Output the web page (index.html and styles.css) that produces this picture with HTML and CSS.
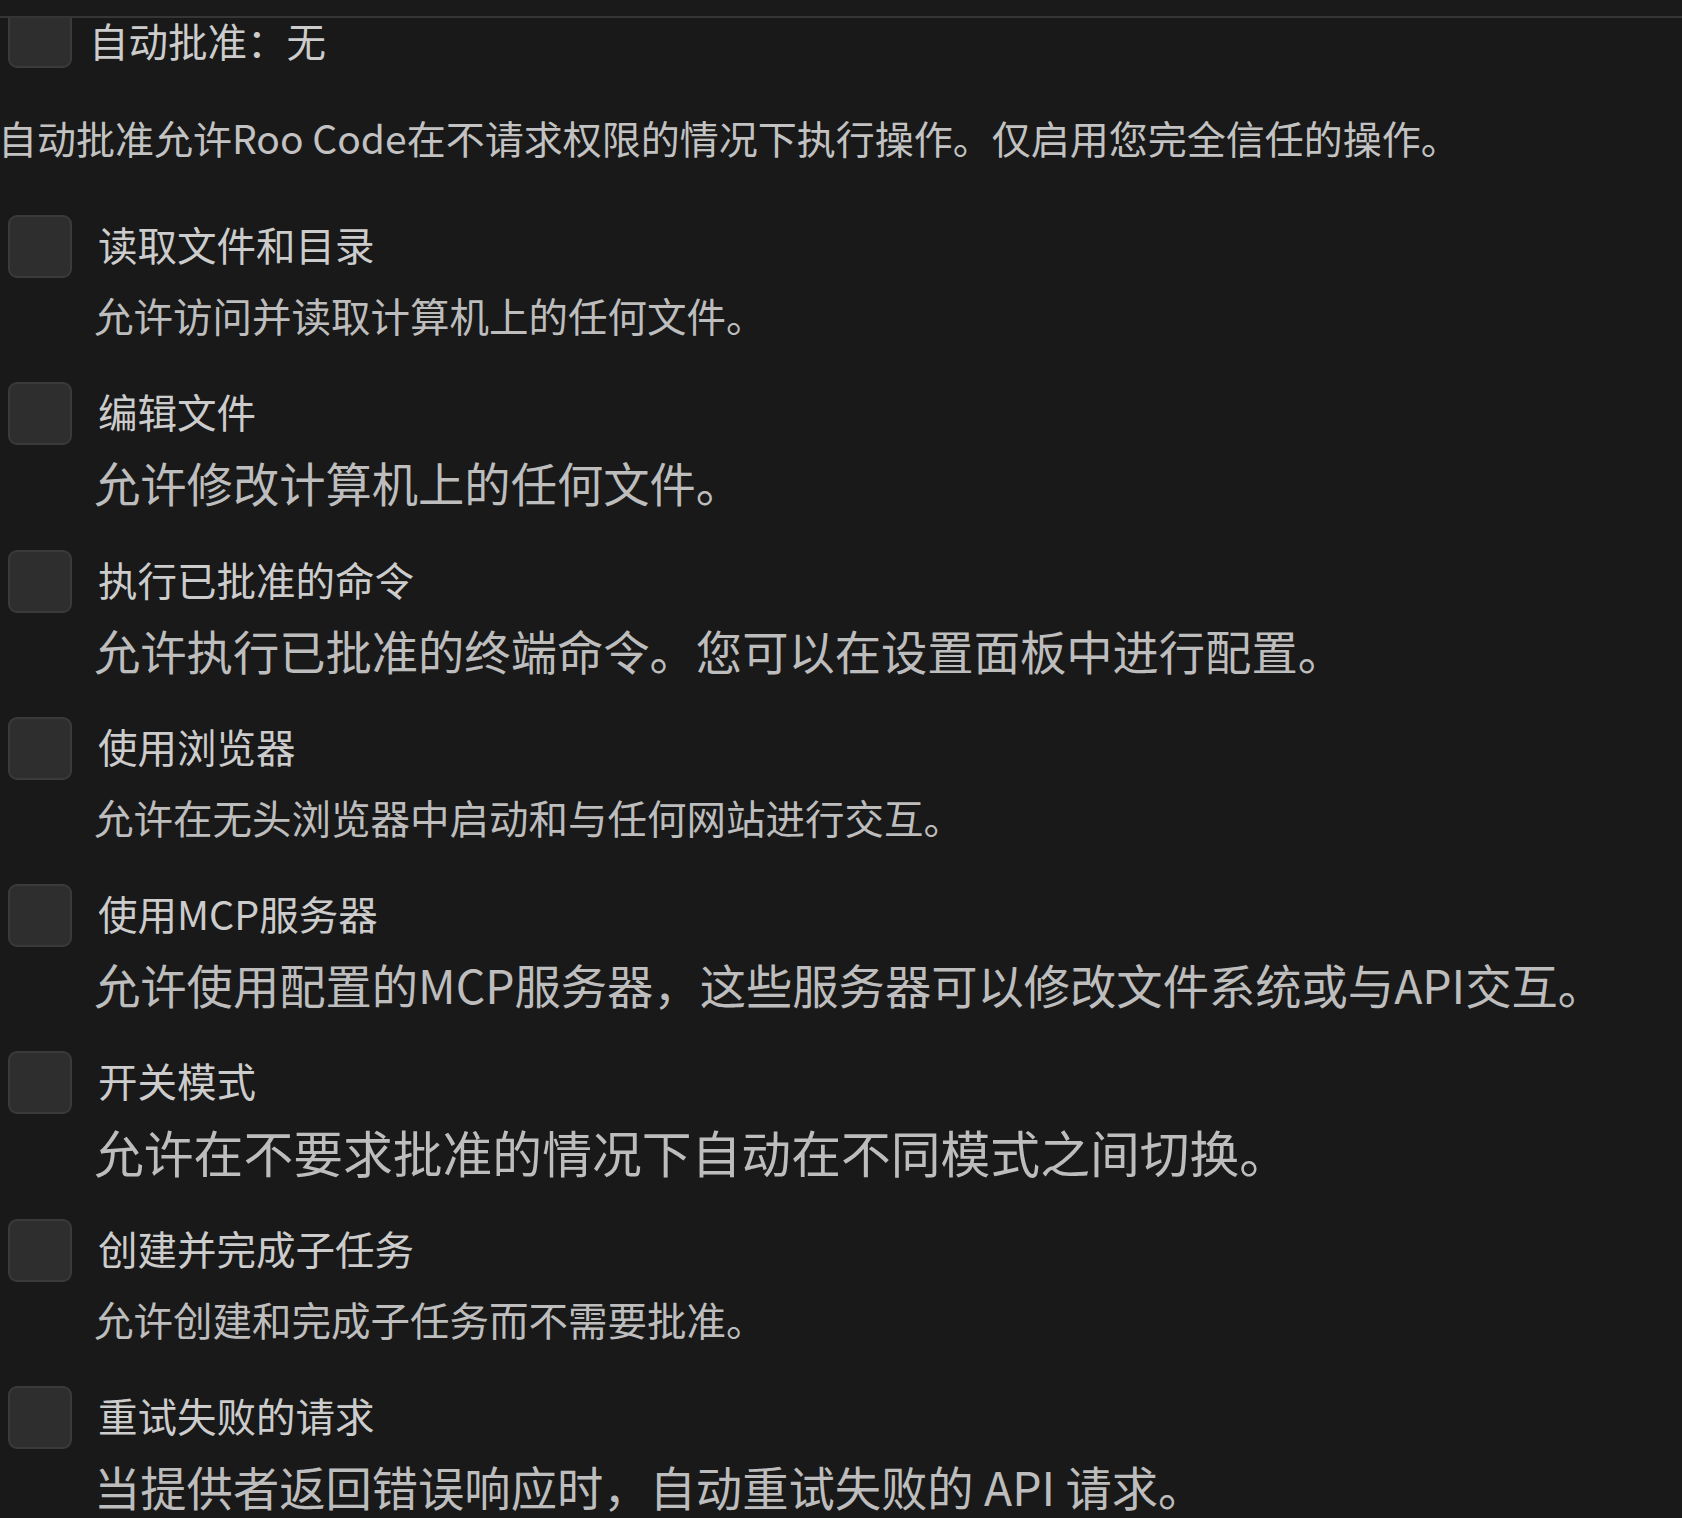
FILE: index.html
```html
<!DOCTYPE html>
<html lang="zh-CN">
<head>
<meta charset="utf-8">
<title>自动批准</title>
<link rel="stylesheet" href="styles.css">
</head>
<body>
<div class="header-edge"></div>
<main class="page">
  <div class="master-row">
    <span class="checkbox"></span>
    <span class="master-title">自动批准：无</span>
  </div>
  <p class="intro">自动批准允许Roo Code在不请求权限的情况下执行操作。仅启用您完全信任的操作。</p>
  <div class="options">
    <div class="option">
      <div class="option-row"><span class="checkbox"></span><span class="option-title">读取文件和目录</span></div>
      <p class="desc">允许访问并读取计算机上的任何文件。</p>
    </div>
    <div class="option">
      <div class="option-row"><span class="checkbox"></span><span class="option-title">编辑文件</span></div>
      <p class="desc desc-m">允许修改计算机上的任何文件。</p>
    </div>
    <div class="option">
      <div class="option-row"><span class="checkbox"></span><span class="option-title">执行已批准的命令</span></div>
      <p class="desc desc-m">允许执行已批准的终端命令。您可以在设置面板中进行配置。</p>
    </div>
    <div class="option">
      <div class="option-row"><span class="checkbox"></span><span class="option-title">使用浏览器</span></div>
      <p class="desc">允许在无头浏览器中启动和与任何网站进行交互。</p>
    </div>
    <div class="option">
      <div class="option-row"><span class="checkbox"></span><span class="option-title">使用MCP服务器</span></div>
      <p class="desc desc-m">允许使用配置的MCP服务器，这些服务器可以修改文件系统或与API交互。</p>
    </div>
    <div class="option">
      <div class="option-row"><span class="checkbox"></span><span class="option-title">开关模式</span></div>
      <p class="desc desc-l">允许在不要求批准的情况下自动在不同模式之间切换。</p>
    </div>
    <div class="option">
      <div class="option-row"><span class="checkbox"></span><span class="option-title">创建并完成子任务</span></div>
      <p class="desc">允许创建和完成子任务而不需要批准。</p>
    </div>
    <div class="option">
      <div class="option-row"><span class="checkbox"></span><span class="option-title">重试失败的请求</span></div>
      <p class="desc desc-m">当提供者返回错误响应时，自动重试失败的 API 请求。</p>
    </div>
  </div>
</main>
</body>
</html>
```

FILE: styles.css
```css
html, body {
  margin: 0;
  padding: 0;
  background: #191919;
}

body {
  font-family: "Noto Sans CJK SC", "Noto Sans", sans-serif;
  color: #c6c6c6;
  overflow: hidden;
}

.header-edge {
  position: absolute;
  top: 0;
  left: 0;
  right: 0;
  height: 16px;
  background: #1a1a1a;
  border-bottom: 2px solid #353535;
  z-index: 2;
}

.page {
  display: flex;
  flex-direction: column;
}

.checkbox {
  display: block;
  flex: none;
  width: 64px;
  height: 63px;
  box-sizing: border-box;
  margin-left: 8px;
  background: #2e2e2e;
  border: 2px solid #3a3a3a;
  border-radius: 9px;
}

.master-row {
  display: flex;
  align-items: flex-start;
  gap: 17px;
  padding-top: 5px;
}

.master-title {
  font-size: 39.5px;
  line-height: 58px;
  margin-top: 6px;
  color: #cccccc;
  white-space: nowrap;
}

.intro {
  margin: 40px 0 0 -2px;
  font-size: 39px;
  line-height: 56px;
  color: #c2c2c2;
  white-space: nowrap;
}

.options {
  display: flex;
  flex-direction: column;
  gap: 39.3px;
  margin-top: 50px;
}

.option {
  display: flex;
  flex-direction: column;
}

.option-row {
  display: flex;
  align-items: flex-start;
  gap: 26px;
  height: 64px;
}

.option-title {
  font-size: 39.5px;
  line-height: 58px;
  color: #cccccc;
  white-space: nowrap;
}

.desc {
  margin: 8px 0 0 94px;
  font-size: 39.5px;
  line-height: 56px;
  color: #bdbdbd;
  white-space: nowrap;
}

.desc-m {
  font-size: 46.3px;
}

.desc-l {
  font-size: 49.8px;
}
```
